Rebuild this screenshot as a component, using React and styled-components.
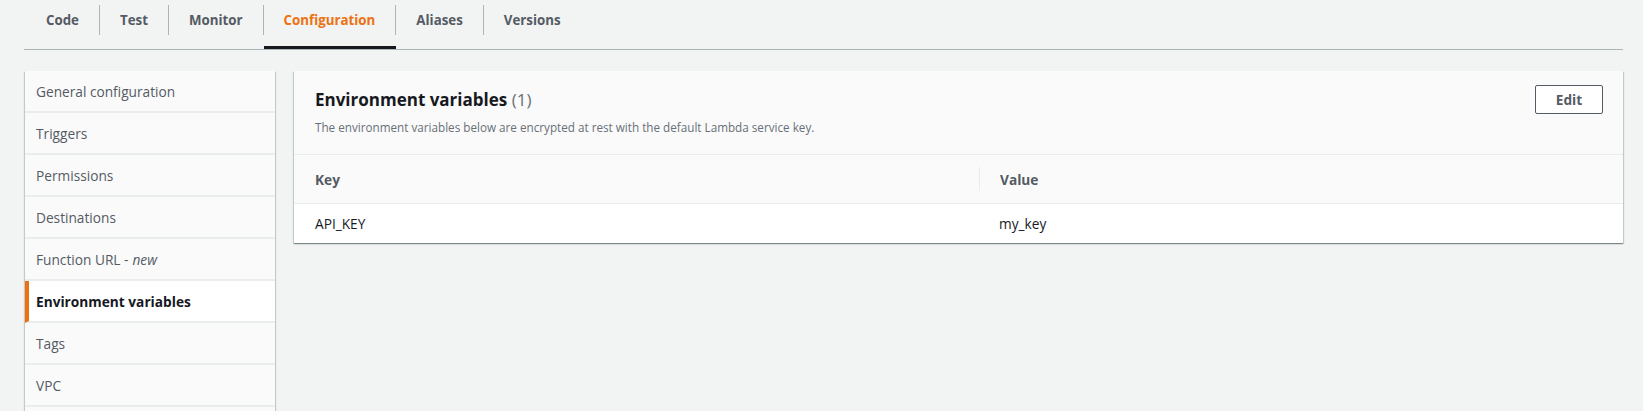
import React from 'react'
import styled, { createGlobalStyle } from 'styled-components'

const GlobalStyle = createGlobalStyle`
  html, body {
    margin: 0;
    padding: 0;
    background: #f2f3f3;
    font-family: "Open Sans", "Noto Sans", sans-serif;
    color: #16191f;
  }
`

const Page = styled.div`
  padding: 0 20px 0 24px;
  height: 411px;
  overflow: hidden;
  box-sizing: border-box;
`

const TabBar = styled.div`
  display: flex;
  border-bottom: 1px solid #aab7b8;
  height: 49px;
`

const Tab = styled.div`
  display: flex;
  align-items: flex-start;
  height: 49px;
  box-sizing: border-box;
  box-shadow: ${p => (p.active ? 'inset 0 -3px 0 #16191f' : 'none')};
`

const TabLabel = styled.div`
  margin-top: 5px;
  height: 30px;
  display: flex;
  align-items: center;
  padding: 0 20px;
  padding-left: ${p => (p.first ? '22px' : '20px')};
  font-size: 13.3px;
  font-weight: 700;
  color: ${p => (p.active ? '#ec7211' : '#545b64')};
  border-right: ${p => (p.last ? 'none' : '1px solid #aab7b8')};
`

const Content = styled.div`
  display: flex;
  align-items: flex-start;
  gap: 19px;
  margin-top: 21px;
  padding-left: 1px;
`

const shadow = `
  box-shadow: 0 1px 1px 0 rgba(0, 28, 36, 0.3), 1px 1px 1px 0 rgba(0, 28, 36, 0.15),
    -1px 1px 1px 0 rgba(0, 28, 36, 0.15);
`

const Sidebar = styled.nav`
  width: 250px;
  flex-shrink: 0;
  min-height: 400px;
  background: #fafafa;
  ${shadow}
`

const NavItem = styled.div`
  height: 40px;
  display: flex;
  align-items: center;
  padding-left: ${p => (p.active ? '7px' : '11px')};
  border-left: ${p => (p.active ? '4px solid #ec7211' : 'none')};
  border-bottom: 2px solid #eaeded;
  background: ${p => (p.active ? '#ffffff' : '#fafafa')};
  font-size: 13.7px;
  font-weight: ${p => (p.active ? 700 : 400)};
  color: ${p => (p.active ? '#16191f' : '#545b64')};

  em {
    font-style: italic;
    margin-left: 4px;
  }
`

const Panel = styled.section`
  flex: 1;
  background: #ffffff;
  ${shadow}
`

const PanelHeader = styled.div`
  display: flex;
  justify-content: space-between;
  align-items: flex-start;
  padding: 18px 20px 19px 21px;
  background: #fafafa;
  border-bottom: 1px solid #eaeded;
`

const Heading = styled.h2`
  margin: 0;
  font-size: 17px;
  line-height: 22px;
  font-weight: 700;
  color: #16191f;

  span {
    font-weight: 400;
    color: #687078;
  }
`

const Description = styled.p`
  margin: 8px 0 0;
  font-size: 11.7px;
  line-height: 16px;
  color: #687078;
`

const Button = styled.button`
  margin-top: -4px;
  width: 68px;
  height: 29px;
  background: #ffffff;
  border: 1px solid #545b64;
  border-radius: 2px;
  font-family: inherit;
  font-size: 13.7px;
  font-weight: 700;
  color: #545b64;
  padding: 0;
`

const Row = styled.div`
  display: grid;
  grid-template-columns: 685px 1fr;
  align-items: center;
  height: ${p => (p.head ? '48px' : '39px')};
  background: ${p => (p.head ? '#fafafa' : '#ffffff')};
  border-bottom: ${p => (p.head ? '1px solid #eaeded' : 'none')};
`

const Cell = styled.div`
  font-size: 13.7px;
  font-weight: ${p => (p.head ? 700 : 400)};
  color: ${p => (p.head ? '#545b64' : '#16191f')};
  padding-left: ${p => (p.second ? '20px' : '21px')};
  height: ${p => (p.head ? '24px' : 'auto')};
  display: flex;
  align-items: center;
  border-left: ${p => (p.second && p.head ? '1px solid #eaeded' : 'none')};
`

const tabs = ['Code', 'Test', 'Monitor', 'Configuration', 'Aliases', 'Versions']

const navItems = [
  'General configuration',
  'Triggers',
  'Permissions',
  'Destinations',
  'Function URL',
  'Environment variables',
  'Tags',
  'VPC'
]

export default function App() {
  return (
    <Page>
      <GlobalStyle />
      <TabBar>
        {tabs.map((t, i) => (
          <Tab key={t} active={t === 'Configuration'}>
            <TabLabel
              active={t === 'Configuration'}
              first={i === 0}
              last={i === tabs.length - 1}
            >
              {t}
            </TabLabel>
          </Tab>
        ))}
      </TabBar>

      <Content>
        <Sidebar>
          {navItems.map(item => (
            <NavItem key={item} active={item === 'Environment variables'}>
              {item === 'Function URL' ? (
                <>
                  Function URL -<em>new</em>
                </>
              ) : (
                item
              )}
            </NavItem>
          ))}
        </Sidebar>

        <Panel>
          <PanelHeader>
            <div>
              <Heading>
                Environment variables <span>(1)</span>
              </Heading>
              <Description>
                The environment variables below are encrypted at rest with the default Lambda
                service key.
              </Description>
            </div>
            <Button>Edit</Button>
          </PanelHeader>
          <Row head>
            <Cell head>Key</Cell>
            <Cell head second>
              Value
            </Cell>
          </Row>
          <Row>
            <Cell>API_KEY</Cell>
            <Cell second>my_key</Cell>
          </Row>
        </Panel>
      </Content>
    </Page>
  )
}
